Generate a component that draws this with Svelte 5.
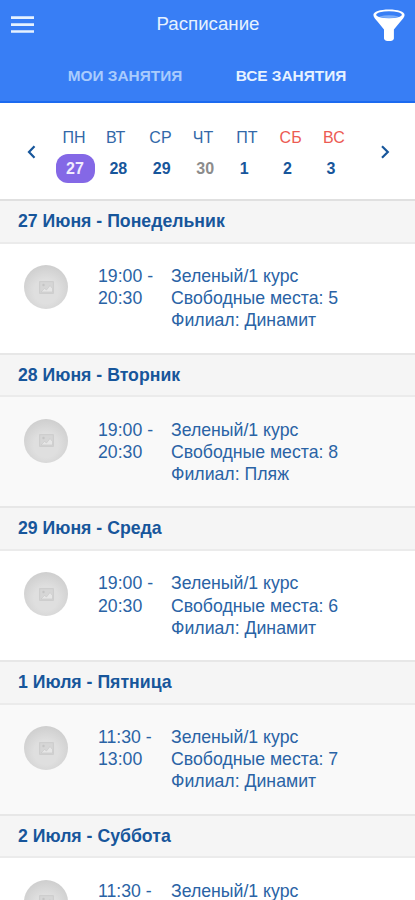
<script>
  const week = [
    { name: 'ПН', num: 27, active: true },
    { name: 'ВТ', num: 28 },
    { name: 'СР', num: 29 },
    { name: 'ЧТ', num: 30, muted: true },
    { name: 'ПТ', num: 1 },
    { name: 'СБ', num: 2, weekend: true },
    { name: 'ВС', num: 3, weekend: true }
  ];
  const lessons = [
    { day: '27 Июня - Понедельник', from: '19:00', to: '20:30', free: 5, branch: 'Динамит' },
    { day: '28 Июня - Вторник', from: '19:00', to: '20:30', free: 8, branch: 'Пляж' },
    { day: '29 Июня - Среда', from: '19:00', to: '20:30', free: 6, branch: 'Динамит' },
    { day: '1 Июля - Пятница', from: '11:30', to: '13:00', free: 7, branch: 'Динамит' },
    { day: '2 Июля - Суббота', from: '11:30' }
  ];
</script>

<div class="screen">
  <header>
    <div class="bar">
      <svg class="menu" width="23" height="18" viewBox="0 0 23 18">
        <path d="M0 1.700h23M0 8.600h23M0 15.500h23" stroke="#e6f2ff" stroke-width="2.700" />
      </svg>
      <h1>Расписание</h1>
      <svg class="filter" width="32" height="33" viewBox="0 0 32 33">
        <path d="M.4 6C.4 2.600 7 .5 16 .5S31.600 2.600 31.600 6c0 2-2 4.200-4.500 7l-6.200 7.500V29.500c0 1.600-2.200 2.600-4.900 2.600S11 31.100 11 29.500v-9L4.900 13C2.400 10.200.4 8 .4 6Z" fill="#fff" />
        <ellipse cx="16" cy="5.700" rx="12.800" ry="3.500" fill="#387ef5" />
        <path d="M6 7.700Q16 4.800 26 7.700Q16 10.300 6 7.700Z" fill="#7daefa" />
      </svg>
    </div>
    <nav>
      <span class="tab off">МОИ ЗАНЯТИЯ</span>
      <span class="tab">ВСЕ ЗАНЯТИЯ</span>
    </nav>
  </header>

  <section class="week">
    <svg class="arrow" width="10" height="14" viewBox="0 0 10 14"><path d="M8.500 1.300 3 7l5.500 5.700" /></svg>
    <div class="days">
      {#each week as d}
        <div class="day">
          <span class="name" class:weekend={d.weekend}>{d.name}</span>
          <span class="num" class:active={d.active} class:muted={d.muted}>{d.num}</span>
        </div>
      {/each}
    </div>
    <svg class="arrow" width="10" height="14" viewBox="0 0 10 14"><path d="M2 1.300 7.800 7 2 12.700" /></svg>
  </section>

  <main>
    {#each lessons as l, i}
      <h2>{l.day}</h2>
      <article class:tint={i % 2 === 1}>
        <div class="avatar">
          <svg width="15" height="13" viewBox="0 0 15 13">
            <rect x=".7" y=".7" width="13.600" height="11.600" fill="#d6d6d6" stroke="#cbcbcb" />
            <circle cx="4.500" cy="4" r="1.200" fill="#c4c4c4" />
            <path d="M2 11 5.500 7.500l2 1.500L11 4.500l2.500 3V11Z" fill="#e6e6e6" stroke="#c8c8c8" stroke-width=".6" />
          </svg>
        </div>
        <div class="time">
          <div>{l.from} -</div>
          {#if l.to}<div>{l.to}</div>{/if}
        </div>
        <div class="info">
          <div>Зеленый/1 курс</div>
          {#if l.branch}
            <div>Свободные места: {l.free}</div>
            <div>Филиал: {l.branch}</div>
          {/if}
        </div>
      </article>
    {/each}
  </main>
</div>

<style>
  :global(body) { margin: 0; }
  .screen {
    width: 415px;
    height: 900px;
    overflow: hidden;
    background: #fff;
    color: #17569b;
    font-family: 'Liberation Sans', Arial, sans-serif;
    display: flex;
    flex-direction: column;
  }
  .screen * { box-sizing: border-box; }
  header {
    flex: none;
    height: 103px;
    background: #387ef5;
    border-bottom: 2px solid #1c6af0;
    color: #e6f2ff;
  }
  .bar {
    height: 50px;
    padding: 0 10px 0 11px;
    display: flex;
    justify-content: space-between;
    align-items: center;
  }
  .menu, .filter { display: block; }
  h1 {
    margin: 0 0 2px 9px;
    font-size: 18.700px;
    line-height: 22px;
    font-weight: 400;
    white-space: nowrap;
  }
  nav { display: flex; padding: 16px 41px 0 42px; }
  .tab {
    flex: 1;
    text-align: center;
    font-size: 15.400px;
    line-height: 20px;
    font-weight: 700;
    white-space: nowrap;
  }
  .off { color: #a9ccfd; }
  .week {
    flex: none;
    height: 98px;
    display: flex;
    justify-content: space-between;
    padding: 25px 25px 0 26px;
    border-bottom: 2px solid #e0e0e0;
  }
  .arrow {
    display: block;
    margin-top: 17px;
    fill: none;
    stroke: #17569b;
    stroke-width: 2.200;
  }
  .days { display: flex; width: 304px; margin-left: 13px; }
  .day {
    flex: 1;
    display: flex;
    flex-direction: column;
    align-items: flex-start;
  }
  .name { font-size: 16px; line-height: 20px; color: #3268a8; }
  .weekend { color: #ec5b53; }
  .num {
    margin: 6px 0 0 -6.500px;
    padding-left: 10px;
    width: 39px;
    height: 29px;
    line-height: 29px;
    font-size: 16px;
    font-weight: 700;
    border-radius: 12px;
  }
  .active { background: #8468e6; color: #f2edff; }
  .muted { color: #8c8c8c; }
  h2 {
    margin: 0;
    height: 42.500px;
    padding-left: 18px;
    background: #f5f5f5;
    border-bottom: 2px solid #ebebeb;
    font-size: 17.700px;
    line-height: 40px;
    font-weight: 700;
    white-space: nowrap;
  }
  article {
    height: 111.200px;
    display: flex;
    padding: 21.500px 0 0 24px;
    border-bottom: 2px solid #e7e7e7;
    font-size: 17.700px;
    line-height: 22.200px;
    white-space: nowrap;
    color: #2a63a5;
  }
  .tint { background: #f9f9f9; }
  .avatar {
    flex: none;
    width: 44px;
    height: 44px;
    border-radius: 50%;
    display: flex;
    align-items: center;
    justify-content: center;
    background: radial-gradient(circle at 50% 60%, #dfdfdf 35%, #cfcfcf 75%);
  }
  .time { width: 73px; margin-left: 30px; }
</style>
